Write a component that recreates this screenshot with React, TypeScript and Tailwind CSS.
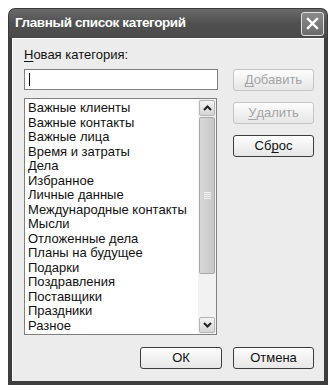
const items = [
  "Важные клиенты",
  "Важные контакты",
  "Важные лица",
  "Время и затраты",
  "Дела",
  "Избранное",
  "Личные данные",
  "Международные контакты",
  "Мысли",
  "Отложенные дела",
  "Планы на будущее",
  "Подарки",
  "Поздравления",
  "Поставщики",
  "Праздники",
  "Разное",
];

function XpButton({
  children,
  disabled,
  className = "",
}: {
  children: React.ReactNode;
  disabled?: boolean;
  className?: string;
}) {
  return (
    <div
      className={`flex h-[22px] items-center justify-center rounded-[3px] border bg-gradient-to-b from-[#fdfdfd] to-[#e6e6e6] text-[13px] ${
        disabled
          ? "border-[#c4c4c4] text-[#a4a4a4]"
          : "border-[#3c3c3c] text-[#111]"
      } ${className}`}
    >
      {children}
    </div>
  );
}

export default function App() {
  return (
    <div
      className="h-[392px] w-[336px] bg-white pl-[8px] pt-[8px]"
      style={{ fontFamily: '"Liberation Sans", Arial, sans-serif' }}
    >
      <div className="flex h-[377px] w-[320px] flex-col">
        {/* title bar */}
        <div className="flex h-[30px] items-center justify-between rounded-t-[7px] border border-b-0 border-[#3a3a3a] bg-gradient-to-b from-[#6a6a6a] via-[#505050] to-[#4a4a4a] pl-[6px] pr-[3px]">
          <span className="text-[13.5px] font-bold tracking-[-0.4px] text-white">
            Главный список категорий
          </span>
          <div className="flex h-[24px] w-[23px] items-center justify-center rounded-[3px] border border-[#e0e0e0] bg-gradient-to-b from-[#8a8a8a] to-[#6c6c6c]">
            <svg width="13" height="13" viewBox="0 0 13 13">
              <path
                d="M2 2 L11 11 M11 2 L2 11"
                stroke="white"
                strokeWidth="2.4"
                strokeLinecap="square"
              />
            </svg>
          </div>
        </div>

        {/* client */}
        <div className="flex flex-1 flex-col border-x-[4px] border-b-[4px] border-[#3e3e3e] bg-[#ececec]">
          <div className="flex flex-1 flex-col border-l border-t border-white pl-[11px] pt-[8px]">
            <div className="flex">
              <div className="flex w-[194px] flex-col">
                <div className="h-[15px] text-[13px] leading-[15px] text-[#111]">
                  <span className="underline underline-offset-2">Н</span>овая
                  категория:
                </div>
                <div className="mt-[7px] flex h-[21px] items-center border border-[#808080] bg-white pl-[4px]">
                  <div className="h-[13px] w-px bg-black" />
                </div>
                <div className="mt-[8px] flex h-[237px] w-[193px] border border-[#808080] bg-white">
                  <div className="flex-1 pl-[3px] pt-[2px] text-[13px] leading-[14.5px] text-[#111]">
                    {items.map((t) => (
                      <div key={t} className="h-[14.5px] whitespace-nowrap">
                        {t}
                      </div>
                    ))}
                  </div>
                  <div className="flex w-[18px] flex-col bg-[#f2f2f2] p-px">
                    <div className="flex h-[16px] items-center justify-center rounded-[2px] border border-[#b4b4b4] bg-gradient-to-b from-[#f4f4f4] to-[#d4d4d4]">
                      <svg width="9" height="6" viewBox="0 0 9 6">
                        <path
                          d="M1 5 L4.5 1.5 L8 5"
                          stroke="#222"
                          strokeWidth="2"
                          fill="none"
                        />
                      </svg>
                    </div>
                    <div className="mt-px flex h-[157px] items-center justify-center rounded-[2px] border border-[#a8a8a8] bg-gradient-to-r from-[#d8d8d8] to-[#c8c8c8]">
                      <div className="flex w-[7px] flex-col gap-px">
                        <div className="h-px bg-[#f4f4f4]" />
                        <div className="h-px bg-[#f4f4f4]" />
                        <div className="h-px bg-[#f4f4f4]" />
                        <div className="h-px bg-[#f4f4f4]" />
                      </div>
                    </div>
                    <div className="flex-1" />
                    <div className="flex h-[16px] items-center justify-center rounded-[2px] border border-[#b4b4b4] bg-gradient-to-b from-[#f4f4f4] to-[#d4d4d4]">
                      <svg width="9" height="6" viewBox="0 0 9 6">
                        <path
                          d="M1 1 L4.5 4.5 L8 1"
                          stroke="#222"
                          strokeWidth="2"
                          fill="none"
                        />
                      </svg>
                    </div>
                  </div>
                </div>
              </div>
              <div className="ml-[15px] mt-[22px] flex w-[81px] flex-col gap-[11px]">
                <XpButton disabled>
                  <span className="underline underline-offset-2">Д</span>
                  обавить
                </XpButton>
                <XpButton disabled>
                  <span className="underline underline-offset-2">У</span>
                  далить
                </XpButton>
                <XpButton>
                  Сб<span className="underline underline-offset-2">р</span>ос
                </XpButton>
              </div>
            </div>
            <div className="mt-[12px] flex gap-[11px] pl-[116px]">
              <XpButton className="w-[82px]">ОК</XpButton>
              <XpButton className="w-[81px]">Отмена</XpButton>
            </div>
          </div>
        </div>
      </div>
    </div>
  );
}
